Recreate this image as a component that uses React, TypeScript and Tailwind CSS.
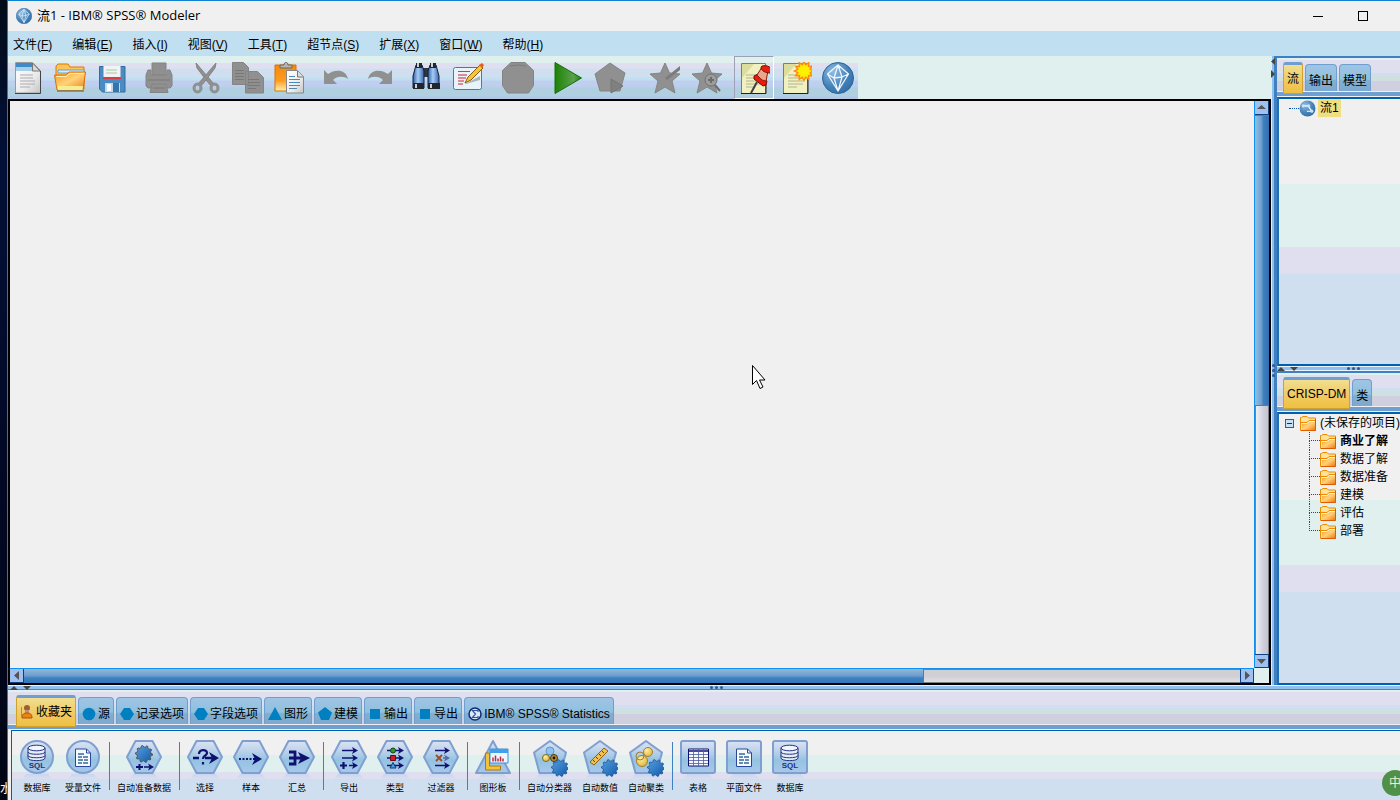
import type { ReactNode } from "react";
import clsx from "clsx";

const stripes =
  "bg-[linear-gradient(to_bottom,#f0f0f0_32%,#dff0ef_32%,#dff0ef_56%,#e0dff0_56%,#e0dff0_66%,#d0dff0_66%)]";
const tabStripes =
  "bg-[linear-gradient(to_bottom,#dff0ef_6%,#e0dff0_6%,#e0dff0_44%,#d0dff0_44%,#d0dff0_56%,#d0dfdf_56%,#d0dfdf_70%,#d0cfdf_70%)]";

const menus = [
  ["文件", "F"],
  ["编辑", "E"],
  ["插入", "I"],
  ["视图", "V"],
  ["工具", "T"],
  ["超节点", "S"],
  ["扩展", "X"],
  ["窗口", "W"],
  ["帮助", "H"],
];

/* ---------- shared drawing pieces ---------- */

function gearPath(cx: number, cy: number, r: number, teeth = 10) {
  const pts: string[] = [];
  for (let i = 0; i < teeth * 4; i++) {
    const a = (i / (teeth * 4)) * Math.PI * 2;
    const rad = i % 4 < 2 ? r : r * 0.8;
    pts.push(`${(cx + Math.cos(a) * rad).toFixed(2)},${(cy + Math.sin(a) * rad).toFixed(2)}`);
  }
  return `M${pts.join("L")}Z`;
}

function burstPath(cx: number, cy: number, r: number, rays = 12) {
  const pts: string[] = [];
  for (let i = 0; i < rays * 2; i++) {
    const a = (i / (rays * 2)) * Math.PI * 2;
    const rad = i % 2 ? r * 0.68 : r;
    pts.push(`${(cx + Math.cos(a) * rad).toFixed(2)},${(cy + Math.sin(a) * rad).toFixed(2)}`);
  }
  return `M${pts.join("L")}Z`;
}

function Defs() {
  return (
    <svg width="0" height="0" className="absolute" aria-hidden="true">
      <defs>
        <linearGradient id="node" x1="0" y1="0" x2="0" y2="1">
          <stop offset="0" stopColor="#dbe3f3" />
          <stop offset="0.3" stopColor="#bed3eb" />
          <stop offset="0.6" stopColor="#94c3e2" />
          <stop offset="1" stopColor="#a8c8ea" />
        </linearGradient>
        <linearGradient id="shadow" x1="0" y1="0" x2="0" y2="1">
          <stop offset="0" stopColor="#b9d3f0" />
          <stop offset="1" stopColor="#d0dff0" stopOpacity="0" />
        </linearGradient>
        <linearGradient id="paper" x1="0" y1="0" x2="1" y2="1">
          <stop offset="0" stopColor="#ffffff" />
          <stop offset="0.6" stopColor="#ececec" />
          <stop offset="1" stopColor="#c4c4c4" />
        </linearGradient>
        <linearGradient id="orange" x1="0" y1="0" x2="1" y2="1">
          <stop offset="0" stopColor="#f79a1c" />
          <stop offset="0.5" stopColor="#ffd27a" />
          <stop offset="1" stopColor="#ee7d10" />
        </linearGradient>
        <linearGradient id="clip" x1="0" y1="0" x2="0" y2="1">
          <stop offset="0" stopColor="#f08a10" />
          <stop offset="0.6" stopColor="#ff9c20" />
          <stop offset="1" stopColor="#fff0b0" />
        </linearGradient>
        <linearGradient id="blueSteel" x1="0" y1="0" x2="1" y2="0">
          <stop offset="0" stopColor="#2f5fa8" />
          <stop offset="0.45" stopColor="#a8ccf4" />
          <stop offset="1" stopColor="#3867b0" />
        </linearGradient>
        <linearGradient id="green" x1="0" y1="0" x2="1" y2="0">
          <stop offset="0" stopColor="#1c8206" />
          <stop offset="0.7" stopColor="#5aa14a" />
          <stop offset="1" stopColor="#1c8206" />
        </linearGradient>
        <radialGradient id="ball" cx="0.35" cy="0.3" r="0.8">
          <stop offset="0" stopColor="#90bce4" />
          <stop offset="0.6" stopColor="#4482b8" />
          <stop offset="1" stopColor="#2f6ca6" />
        </radialGradient>
        <radialGradient id="gold" cx="0.35" cy="0.3" r="0.8">
          <stop offset="0" stopColor="#fff0a8" />
          <stop offset="1" stopColor="#e0b030" />
        </radialGradient>
        <linearGradient id="gear" x1="0" y1="0" x2="1" y2="1">
          <stop offset="0" stopColor="#58a0e0" />
          <stop offset="1" stopColor="#1058a8" />
        </linearGradient>
      </defs>
    </svg>
  );
}

function Icon({ children, size = 32 }: { children: ReactNode; size?: number }) {
  return (
    <svg width={size} height={size} viewBox="0 0 32 32" aria-hidden="true">
      {children}
    </svg>
  );
}

function Gem({ size = 32 }: { size?: number }) {
  return (
    <Icon size={size}>
      <circle cx="16" cy="16" r="15.5" fill="url(#ball)" stroke="#2c669c" />
      <path
        d="M16 3 5.500 12 16 29 26.500 12ZM5.500 12 12 16l8-1 6.500-3M16 3l-4 13 4 13 4-14Z"
        fill="none"
        stroke="#eef6ff"
        strokeWidth="1.3"
        strokeLinejoin="round"
      />
    </Icon>
  );
}

function Folder() {
  return (
    <svg width="16" height="15" viewBox="0 0 16 15" className="shrink-0" aria-hidden="true">
      <path d="M.5 14.500V1.500h1L3 .5h4l1.500 1.500h7v12.500Z" fill="#ffe39a" stroke="#f08a00" />
      <path d="M2 7h5l2-2h6v9H2Z" fill="url(#orange)" />
      <path d="M1 6.500h6l2-2h6" fill="none" stroke="#f08a00" />
      <path d="M2 7.500h5.500l2-2H15" fill="none" stroke="#fff6d0" />
      <path d="M1 14.500h14.500V3" fill="none" stroke="#e05a00" />
    </svg>
  );
}

function YellowSheet() {
  return (
    <>
      <path d="M3.500 1.500h24v30h-24Z" fill="#f0f0c0" stroke="#7d8068" />
      <path d="M4 2h12L4 16Z" fill="#dcdc9c" />
      <path d="M8 13h15M8 16h15M8 19h15M8 22h15M8 25h9" stroke="#b4b490" />
      <path d="M3 31.500h25V4" fill="none" stroke="#222" />
    </>
  );
}

/* ---------- toolbar ---------- */

const grey = "#909090";
const greyEdge = "#848484";
const starPath = "M16 1 20.500 11 31 12l-8 7 3 12-10-6-10 6 3-12-8-7 10.500-1Z";

const toolIcons: Record<string, ReactNode> = {
  新建: (
    <>
      <path d="M3.500 .5h17l8 8v22.500h-25Z" fill="url(#paper)" stroke="#9a9a9a" />
      <path d="M4 1h16v4H4Z" fill="#3f8bc8" />
      <path d="M4 5h16v4H4Z" fill="#a6cfea" />
      <path d="M20.500 1v8H28Z" fill="#d8d8d8" stroke="#777" />
      <path d="M8 13h13M8 16h13M8 19h15M8 22h15M8 25h10" stroke="#a9a9b4" />
      <path d="M3 31.500H28.500V9" fill="none" stroke="#444" />
    </>
  ),
  打开: (
    <>
      <path d="M2 12V4l2-2h10l2 3h14v22H4Z" fill="#fbc55c" stroke="#e07a00" />
      <path d="M4 8h26v3H4Z" fill="#d8ecf8" stroke="#6aa0c8" />
      <path d="M.5 13h11l4-3h16L29 28H3Z" fill="url(#orange)" stroke="#e06c00" />
      <path d="M2 14.500h10l4-3h14" fill="none" stroke="#fff0b0" />
      <path d="M4 24h25l-.5 4H4Z" fill="#f3ef90" />
      <path d="M3 29h27" stroke="#6c5230" />
    </>
  ),
  保存: (
    <>
      <path d="M3.500 4.500h25.500V30H6.500l-3-3Z" fill="#4a8cc2" stroke="#2f6da4" />
      <path d="M7.500 4h17v13h-17Z" fill="#f2f4f4" />
      <path d="M10 8h11M10 11h11" stroke="#a8c8a8" />
      <path d="M7 16h18" stroke="#d84048" strokeWidth="2" />
      <path d="M9 21h15v9H9Z" fill="#c4d8e8" />
      <path d="M17 21h6v9h-6Z" fill="#3474ac" />
      <path d="M11 22h4v7h-4Z" fill="#fff" />
    </>
  ),
  打印: (
    <g fill={grey} stroke={greyEdge}>
      <path d="M9 1h14v12H9Z" />
      <path d="M3 13l2-5h3v5h16V8h3l2 5v11l-2 2H5l-2-2Z" />
      <path d="M9 22h14l2 8.500H7Z" />
      <path d="M5 18h22M10 26h12" stroke="#787878" />
    </g>
  ),
  剪切: (
    <g fill={grey} stroke={greyEdge}>
      <path d="M6 1l1 5 9 12 5 6 3-2-7-8Z" />
      <path d="M26 1l-1 5-9 12-5 6-3-2 7-8Z" />
      <ellipse cx="7.500" cy="26" rx="3.500" ry="4" fill="none" strokeWidth="3" stroke={grey} />
      <ellipse cx="24.500" cy="26" rx="3.500" ry="4" fill="none" strokeWidth="3" stroke={grey} />
    </g>
  ),
  复制: (
    <>
      <path d="M.5 .5h11l5 5v17H.5ZM13.500 9.500h12l6 6V31h-18Z" fill={grey} stroke={greyEdge} />
      <path d="M3 8.500h9M3 11.500h9M3 14.500h9M3 17.500h9M16 17.500h11M16 20.500h12M16 23.500h12M16 26.500h8" stroke="#787878" />
    </>
  ),
  粘贴: (
    <>
      <path d="M1 3h21v26H1Z" fill="url(#clip)" stroke="#d87400" />
      <path d="M6 6V3h4c0-3.500 4-3.500 4 0h4v3Z" fill="#b4b4b4" stroke="#666" />
      <path d="M12.500 8.500h11l6 6V31h-17Z" fill="url(#paper)" stroke="#888" />
      <path d="M15 14.500h6M15 17.500h11M15 20.500h11M15 23.500h11M15 26.500h8" stroke="#4b8ab4" />
      <path d="M23.500 9v6h6" fill="#ddd" stroke="#777" />
    </>
  ),
  撤销: <path d="M3 8v14h13l-4-4c4-4 11-4 15-1C25 7 14 7 7 12Z" fill={grey} />,
  重做: <path d="M29 8v14H16l4-4c-4-4-11-4-15-1C7 7 18 7 25 12Z" fill={grey} />,
  查找: (
    <>
      <path d="M13 6h6v9h-6Z" fill="#30363f" />
      <path d="M6 3h6l2 6v17H3V14Z" fill="url(#blueSteel)" stroke="#142038" />
      <path d="M20 3h6l3 11v12H18V9Z" fill="url(#blueSteel)" stroke="#142038" />
      <path d="M6 1h6v5H6ZM20 1h6v5h-6ZM3 21h11v6H3ZM18 21h12v6H18Z" fill="#22262c" />
      <path d="M8 1v4M22 1v4M6 22v4M21 22v4" stroke="#c9d2dc" strokeWidth="2" />
    </>
  ),
  编辑: (
    <>
      <rect x="1.500" y="5.500" width="28" height="22" rx="2" fill="#e9f3fa" stroke="#2f83bd" />
      <path d="M6 9.500h12" stroke="#3478b8" />
      <path d="M6 13h9M6 16h8M6 19h6M6 22h5" stroke="#d02030" />
      <path d="M13 22 28 14v4l-14 4Z" fill="#a9b6c0" />
      <path d="m13 21 3-6L28 3l3 3-12 12Z" fill="#f4c63c" stroke="#8a5a10" />
      <path d="m27 3 3-2 2 2-2 3Z" fill="#e06020" />
    </>
  ),
  停止: (
    <>
      <path d="M9 .5h14l8.500 8v15l-5 7.500h-21L.5 23.500v-15Z" fill={grey} stroke={greyEdge} />
      <path d="M8 4q8-2 16 0" fill="none" stroke="#7c7c7c" />
    </>
  ),
  运行: <path d="M3 .5v31L29.500 16Z" fill="url(#green)" stroke="#176e08" />,
  运行选择: (
    <>
      <path d="M16 1 31 11l-5 18H6L1 12Z" fill={grey} stroke={greyEdge} />
      <path d="M17 17v14l12-7Z" fill="#808080" stroke="#757575" />
    </>
  ),
  添加到收藏: (
    <>
      <path d={starPath} fill={grey} stroke={greyEdge} />
      <path d="m16 16 15-12v4L18 18Z" fill="#7c7c7c" />
    </>
  ),
  搜索节点: (
    <>
      <path d={starPath} fill={grey} stroke={greyEdge} />
      <circle cx="20" cy="18" r="6" fill="#9c9c9c" stroke="#707070" />
      <path d="M17 18h6M20 15v6M24 23l5 6" stroke="#6c6c6c" strokeWidth="2" />
    </>
  ),
  固定: (
    <>
      <YellowSheet />
      <path d="m13 31 6-11" stroke="#404040" strokeWidth="2" />
      <path d="m16 14 4-2 9 7-1 4-3 1-9-7Z" fill="#f01808" stroke="#701008" />
      <path d="m19 13 5-8 6 4-2 10-4-1Z" fill="#e8a888" stroke="#8c2018" />
      <path d="M23 5c2-3 11-1 11 4l-2 2c-4 0-9-2-9-6Z" fill="#e82010" stroke="#801008" />
    </>
  ),
  新注释: (
    <>
      <YellowSheet />
      <path d={burstPath(24, 9, 9.500)} fill="#fff000" stroke="#ff8a10" strokeWidth="1.500" />
    </>
  ),
};

const toolGroups = [
  ["新建", "打开", "保存"],
  ["打印"],
  ["剪切", "复制", "粘贴"],
  ["撤销", "重做"],
  ["查找", "编辑"],
  ["停止"],
  ["运行", "运行选择"],
  ["添加到收藏", "搜索节点"],
  ["固定", "新注释", "关于"],
];

function Toolbar() {
  return (
    <div className="h-[43px] bg-[#dff0ef] flex shrink-0">
      <div
        role="toolbar"
        className="flex items-stretch gap-[7px] bg-[linear-gradient(to_bottom,#dff0ef_7px,#e0dff0_7px,#e0dff0_12px,#d0dff0_13px,#d0dff0_21px,#c0dff0_22px,#c0dff0_24px,#c0cff0_25px,#c0cff0_29px,#b0cfe0_33px,#b0cfe0_40px,#b0c7e8_41px)]"
      >
        {toolGroups.map((group) => (
          <div key={group[0]} className={clsx("flex gap-0.5", group[0] === "添加到收藏" && "ml-2")}>
            {group.map((name) => (
              <button
                key={name}
                aria-label={name}
                className={clsx(
                  "flex items-center justify-center",
                  name === "停止" ? "w-[46px]" : "w-10",
                  name === "固定" && "border border-t-[#a0a0b4] border-l-[#a0a0b4] border-r-white border-b-white"
                )}
              >
                {name === "关于" ? <Gem /> : <Icon>{toolIcons[name]}</Icon>}
              </button>
            ))}
          </div>
        ))}
      </div>
    </div>
  );
}

/* ---------- canvas with scroll bars ---------- */

const arrowPaths = {
  up: "M1 7h9L5.500 3Z",
  down: "M1 3h9L5.500 8Z",
  left: "M8 1v9L3 5.500Z",
  right: "M3 1v9l5-4.500Z",
};

function ScrollButton({ dir }: { dir: keyof typeof arrowPaths }) {
  return (
    <button
      aria-label={dir}
      className={clsx(
        "size-3.5 shrink-0 flex items-center justify-center bg-[#a0c0f0] border-r border-b border-[#104080]",
        dir === "right" && "border-l",
        dir === "down" && "border-t"
      )}
    >
      <svg width="11" height="11" viewBox="0 0 11 11">
        <path d={arrowPaths[dir]} fill="#555" />
      </svg>
    </button>
  );
}

function Canvas() {
  return (
    <main className="relative flex-1 min-h-0 border-2 border-black bg-[#f0f0f0] grid grid-cols-[1fr_15px] grid-rows-[1fr_15px]">
      <div />
      <div className="flex flex-col border-l border-[#1090f0] bg-[#d0cfdf]">
        <ScrollButton dir="up" />
        <div className="flex-1 flex flex-col">
          <div className="h-[54%] border-y border-[#1090f0] bg-[linear-gradient(to_right,#90c0e0,#6f9fd0_45%,#4080c0_60%,#3070b0)]" />
          <div className="flex-1 border-x border-[#808088] bg-[linear-gradient(to_right,#f0f0f0,#e0dfe8_30%,#d0cfdf_60%,#c4c4cc)]" />
        </div>
        <ScrollButton dir="down" />
      </div>
      <div className="flex border-t border-[#1090f0]">
        <ScrollButton dir="left" />
        <div className="flex-1 flex">
          <div className="w-[74%] border-r border-[#1090f0] bg-[linear-gradient(to_bottom,#90b8d8,#6fa0d0_45%,#4080c0_65%,#3078b8)]" />
          <div className="flex-1 border-y border-[#808080] bg-[linear-gradient(to_bottom,#d0cfd4_50%,#e0dfe8)]" />
        </div>
        <ScrollButton dir="right" />
      </div>
      <div className="bg-[#dff0ef]" />
      {/* pointer */}
      <svg className="absolute left-[741px] top-[263px]" width="17" height="26" viewBox="0 0 17 26">
        <path d="M1.500 1.500v19l4-4 3.500 8 3-1.500-3.500-7h5.500Z" fill="#fff" stroke="#000" />
      </svg>
    </main>
  );
}

/* ---------- tabs ---------- */

function Tab({ active, icon, children }: { active?: boolean; icon?: ReactNode; children: ReactNode }) {
  return (
    <button
      role="tab"
      aria-selected={!!active}
      className={clsx(
        "relative flex items-center gap-0.5 px-[3px] border whitespace-nowrap shrink-0 leading-4",
        active
          ? "h-8 -mb-[3px] z-10 border-[#d0a030] border-t-[#6f9fd0] border-t-3 rounded-t-[3px] bg-[linear-gradient(to_bottom,#f0df90,#f0cf70_40%,#f0bf40)]"
          : "h-[27px] pt-1.5 border-[#6f9fd0] border-b-0 rounded-t-[4px] bg-[linear-gradient(to_bottom,#a0c4e4,#90c0e0_55%,#80afcf_60%,#7fa8d0)]"
      )}
    >
      {icon}
      {children}
    </button>
  );
}

function TabBar({ children, className }: { children: ReactNode; className: string }) {
  return (
    <div className="shrink-0">
      <div role="tablist" className={clsx("flex items-end gap-0.5", tabStripes, className)}>
        {children}
      </div>
      <div className="h-1.5 border-y border-[#f0f0f0] bg-[#6f9fd0]" />
    </div>
  );
}

function TabShape({ shape }: { shape: string }) {
  return (
    <svg width="14" height="14" viewBox="0 0 14 14" fill="#0080c0" aria-hidden="true">
      {shape === "circle" && <circle cx="7" cy="7" r="6.300" />}
      {shape === "hexagon" && <path d="M4 1h6l4 6-4 6H4L0 7Z" />}
      {shape === "triangle" && <path d="M7 0 14 13H0Z" />}
      {shape === "pentagon" && <path d="m7 0 7 5.500L11 13H3L0 5.500Z" />}
      {shape === "square" && <path d="M2 2h10v10H2Z" />}
      {shape === "sigma" && (
        <>
          <circle cx="7" cy="7" r="6" fill="#d8e8f8" stroke="#102878" strokeWidth="1.500" />
          <path d="M10 5V3.500H4.500L7.500 7l-3 3.500H10V9" fill="none" stroke="#305898" strokeWidth="1.200" />
        </>
      )}
      {shape === "person" && (
        <>
          <circle cx="7" cy="3" r="3" fill="#9c6038" />
          <path d="M5 5h4v4H5Z" fill="#c09070" />
          <path d="M2 13c0-4 2-5 5-5s5 1 5 5Z" fill="#f08010" stroke="#a05810" />
          <path d="M1.500 2v10" stroke="#8890a0" />
        </>
      )}
    </svg>
  );
}

/* ---------- right-hand managers ---------- */

function Dots({ vertical }: { vertical?: boolean }) {
  return (
    <span className={clsx("flex gap-0.5", vertical && "flex-col")}>
      {[0, 1, 2].map((i) => (
        <span key={i} className="size-[3px] rounded-full bg-[#305890]" />
      ))}
    </span>
  );
}

function SplitArrows() {
  return (
    <svg width="22" height="4" viewBox="0 0 22 4" fill="#444" aria-hidden="true">
      <path d="M0 4 4 0l4 4ZM13 0h8l-4 4Z" />
    </svg>
  );
}

const phases = ["商业了解", "数据了解", "数据准备", "建模", "评估", "部署"];

function SidePanels() {
  return (
    <aside className="w-[129px] shrink-0 flex border-l border-[#dff0ef]">
      <div className="relative z-10 w-0.5 bg-[#90c0f0] flex flex-col items-center justify-between">
        <svg width="4" height="22" viewBox="0 0 4 22" fill="#444" aria-hidden="true">
          <path d="M4 2v7L0 5.500ZM0 14v8l4-4Z" />
        </svg>
        <Dots vertical />
        <span className="h-[22px]" />
      </div>
      <div className="flex-1 min-w-0 flex flex-col border-l-3 border-[#4080c0] bg-[#4080c0]">
        <section className="flex-[99] min-h-0 flex flex-col pt-0.5">
          <TabBar className="h-[33px] pl-1.5">
            <Tab active>流</Tab>
            <Tab>输出</Tab>
            <Tab>模型</Tab>
          </TabBar>
          <div className={clsx("flex-1 border-2 border-r-0 border-[#0060b0] border-l-[#2070b8]", stripes)}>
            <div className="flex items-center h-[18px] pl-2.5">
              <span className="w-2.5 border-t border-dotted border-[#0050b0]" />
              <Icon size={17}>
                <circle cx="16" cy="16" r="15" fill="url(#ball)" />
                <path d="M8 11h9l7 10M15 21h8" fill="none" stroke="#fff" strokeWidth="2" />
                <circle cx="8" cy="11" r="3" fill="#cfe2f4" />
                <circle cx="18" cy="11" r="3" fill="#cfe2f4" />
                <circle cx="24" cy="21" r="3" fill="#cfe2f4" />
              </Icon>
              <span className="ml-0.5 px-0.5 leading-[18px] bg-[#f0df80]">流1</span>
            </div>
          </div>
        </section>
        <div className="h-[5px] bg-[#90c0f0] border-y border-y-[#e8f4ff] flex items-center shrink-0">
          <SplitArrows />
          <span className="ml-12">
            <Dots />
          </span>
        </div>
        <section className="flex-[100] min-h-0 flex flex-col pt-0.5">
          <TabBar className="h-[33px] pl-1.5">
            <Tab active>CRISP-DM</Tab>
            <Tab>类</Tab>
          </TabBar>
          <div className={clsx("flex-1 border-2 border-r-0 border-[#0060b0] border-l-[#2070b8] whitespace-nowrap overflow-hidden", stripes)}>
            <div className="flex items-center h-[18px] pl-1.5">
              <button aria-label="折叠" className="size-[9px] border border-[#2060b0] bg-[#c8e0f8] flex items-center justify-center">
                <span className="w-[5px] h-px bg-[#103070]" />
              </button>
              <span className="ml-1.5 mr-1">
                <Folder />
              </span>
              (未保存的项目)
            </div>
            <ul className="pl-[30px]">
              {phases.map((phase, i) => (
                <li key={phase} className="flex items-center h-[18px]">
                  <span className="self-stretch w-[11px] flex flex-col">
                    <span className="h-[9px] border-l border-b border-dotted border-[#0050b0]" />
                    {i < phases.length - 1 && <span className="h-[9px] border-l border-dotted border-[#0050b0]" />}
                  </span>
                  <Folder />
                  <span className={clsx("ml-1", i === 0 && "font-bold")}>{phase}</span>
                </li>
              ))}
            </ul>
          </div>
        </section>
      </div>
    </aside>
  );
}

/* ---------- node palette ---------- */

const frames: Record<string, string> = {
  circle: "M18 1a16 16 0 1 1 0 32 16 16 0 1 1 0-32Z",
  hexagon: "M9.500 1h17L35 17l-8.500 16h-17L1 17Z",
  pentagon: "m18 1 16 11.500L28.500 33h-21L2 12.500Z",
  triangle: "M18 1 35 33H1Z",
  square: "M3 1h30q2 0 2 2v28q0 2-2 2H3q-2 0-2-2V3q0-2 2-2Z",
};

const navy = "#101070";

function Arrow({ y, x1 = 11, x2 = 27 }: { y: number; x1?: number; x2?: number }) {
  return (
    <>
      <path d={`M${x1} ${y}H${x2 - 3}`} stroke={navy} strokeWidth="1.500" />
      <path d={`M${x2 - 6} ${y - 3.5} ${x2} ${y}l-6 3.500 1.500-3.500Z`} fill={navy} />
    </>
  );
}

const sqlDisk = (
  <>
    <path
      d="M9 8v10c0 3.500 17 3.500 17 0V8M9 12c0 3 17 3 17 0M9 15.500c0 3 17 3 17 0"
      fill="#e4eefa"
      stroke="#28307c"
    />
    <ellipse cx="17.500" cy="8" rx="8.500" ry="2.800" fill="#f0f6fd" stroke="#28307c" />
    <text x="18" y="27.500" textAnchor="middle" fontSize="8" fontWeight="bold" fill="#28307c">
      SQL
    </text>
  </>
);

const sheet = (
  <>
    <path d="M10.500 9h11l4 4v13.500h-15Z" fill="#f4faff" stroke="#284898" />
    <path d="M21.500 9v4h4" fill="none" stroke="#284898" />
    <path d="M13 14h6M13 17h4M18 17h5M13 20h5M19 20h4M13 23h4M18 23h5" stroke="#386898" strokeWidth="1.500" />
  </>
);

const cornerGear = <path d={gearPath(28, 28, 8.5)} fill="url(#gear)" stroke="#0f4c90" strokeWidth="0.700" />;

const glyphs: Record<string, ReactNode> = {
  sql: sqlDisk,
  sheet,
  prep: (
    <>
      <path d={gearPath(18, 14, 8.5)} fill="url(#gear)" stroke="#505860" />
      <path d="M10 27h7M13.500 24v6" stroke={navy} strokeWidth="2" />
      <Arrow y={27} x1={18} x2={28} />
    </>
  ),
  select: (
    <>
      <path d="M6 18h6M18 18h8" stroke={navy} strokeWidth="2.500" />
      <path d="M22 12l10 6-10 6 3-6Z" fill={navy} />
      <path d="M12 14c0-5 8-5 8-1 0 3-4 2-4 6M16 22v2.500" fill="none" stroke={navy} strokeWidth="2.200" />
    </>
  ),
  sample: (
    <>
      <path d="M6 19h16" stroke={navy} strokeWidth="2" strokeDasharray="2 1.500" />
      <path d="M19 13l10 6-10 6 3-6Z" fill={navy} />
    </>
  ),
  aggregate: (
    <>
      <path d="M10 12h6v12h-6M10 18h12" fill="none" stroke={navy} strokeWidth="2.800" />
      <path d="M19 12l12 6-12 6 3-6Z" fill={navy} />
    </>
  ),
  derive: (
    <>
      <Arrow y={10.5} />
      <Arrow y={18} />
      <Arrow y={25.5} x1={18} />
      <path d="M9 25.500h7M12.500 22v7" stroke={navy} strokeWidth="2.200" />
    </>
  ),
  type: (
    <>
      <Arrow y={10.5} x1={10} />
      <Arrow y={18} x1={10} />
      <Arrow y={25.5} x1={10} />
      <circle cx="16" cy="10.500" r="2.500" fill="#28a028" stroke="#104810" />
      <path d="M13.500 15.500h5v5h-5Z" fill="#d81828" stroke="#601010" />
      <path d="m16 22.500 3 5.500h-6Z" fill="#48a0e0" stroke="#103870" />
    </>
  ),
  filter: (
    <>
      <Arrow y={10.5} x1={12} />
      <g opacity="0.500">
        <Arrow y={18} x1={20} />
      </g>
      <Arrow y={25.5} x1={12} />
      <path d="m13 15 6 6M19 15l-6 6" stroke="#a04828" strokeWidth="1.800" />
    </>
  ),
  graph: (
    <>
      <path d="M15 9h18v14H15Z" fill="#f0f6ff" stroke="#3890d8" />
      <path d="M15 9h18v4H15Z" fill="#40a0e8" />
      <path d="M18 21.500v-4M20.500 21.500v-6M23 21.500v-3M25.500 21.500v-5M28 21.500v-3" stroke="#c02838" strokeWidth="1.500" />
      <path d="M10.500 13h4v13h11v4h-15Z" fill="#f4c040" stroke="#b07808" />
    </>
  ),
  classify: (
    <>
      <circle cx="18" cy="11" r="4" fill="#90c4f0" stroke="#5c98d8" />
      <circle cx="14" cy="18" r="3.500" fill="url(#gold)" stroke="#806818" />
      <circle cx="22" cy="18" r="3.500" fill="#c09030" stroke="#483410" />
      <circle cx="22" cy="18" r="1.400" fill="#201000" />
      {cornerGear}
    </>
  ),
  numeric: (
    <>
      <path d="M8 22 22 8l4 3-14 14Z" fill="#f0c050" stroke="#906010" />
      <path d="m11 20 2 2M14 17l2 2M17 14l2 2M20 11l2 2" stroke="#604008" />
      {cornerGear}
    </>
  ),
  cluster: (
    <>
      <circle cx="20" cy="12" r="4.500" fill="url(#gold)" stroke="#a08030" />
      <circle cx="14" cy="21" r="5.500" fill="url(#gold)" stroke="#a08030" />
      <circle cx="12" cy="16" r="4" fill="none" stroke="#a08030" />
      {cornerGear}
    </>
  ),
  table: (
    <>
      <path d="M8.500 9h20v17h-20Z" fill="#f4f8ff" stroke={navy} />
      <path d="M8.500 11h20" stroke={navy} strokeWidth="1.500" />
      <path d="M9 14.500h19M9 17.500h19M9 20.500h19M9 23.500h19M13.500 9v17M18.500 9v17M23.500 9v17" stroke="#5058a0" strokeWidth="0.800" />
    </>
  ),
};

const palette = [
  [
    ["数据库", "circle", "sql"],
    ["受量文件", "circle", "sheet"],
  ],
  [["自动准备数据", "hexagon", "prep"]],
  [
    ["选择", "hexagon", "select"],
    ["样本", "hexagon", "sample"],
    ["汇总", "hexagon", "aggregate"],
  ],
  [
    ["导出", "hexagon", "derive"],
    ["类型", "hexagon", "type"],
    ["过滤器", "hexagon", "filter"],
  ],
  [["图形板", "triangle", "graph"]],
  [
    ["自动分类器", "pentagon", "classify"],
    ["自动数值", "pentagon", "numeric"],
    ["自动聚类", "pentagon", "cluster"],
  ],
  [
    ["表格", "square", "table"],
    ["平面文件", "square", "sheet"],
    ["数据库", "square", "sql"],
  ],
];

const paletteTabs = [
  ["源", "circle"],
  ["记录选项", "hexagon"],
  ["字段选项", "hexagon"],
  ["图形", "triangle"],
  ["建模", "pentagon"],
  ["输出", "square"],
  ["导出", "square"],
  ["IBM® SPSS® Statistics", "sigma"],
];

function Palette() {
  return (
    <footer className="shrink-0">
      <TabBar className="h-[34px] pl-2">
        <Tab active icon={<TabShape shape="person" />}>
          收藏夹
        </Tab>
        {paletteTabs.map(([label, shape]) => (
          <Tab key={label} icon={<TabShape shape={shape} />}>
            {label}
          </Tab>
        ))}
      </TabBar>
      <div className="bg-[#f0f0f0] pl-[3px]">
        <div className="h-[70px] overflow-hidden flex border-t border-l border-[#0060b0] pl-0.5 bg-[linear-gradient(to_bottom,#f0f0f0_24px,#dff0ef_24px,#dff0ef_41px,#e0dff0_41px,#e0dff0_48px,#d0dff0_48px)]">
          {palette.map((group, g) => (
            <div key={g} className="flex">
              {g > 0 && <span className="w-px h-12 mt-[11px] ml-[3px] mr-0.5 bg-[#4080c0]" />}
              {group.map(([label, frame, glyph]) => (
                <button key={label} className="min-w-[46px] px-[5px] pt-[9px] flex flex-col items-center">
                  <svg width="36" height="42" viewBox="0 0 36 42" aria-hidden="true">
                    <path d="M7 34h22l5 6v2H2v-2Z" fill="url(#shadow)" opacity="0.700" />
                    <path d={frames[frame]} fill="url(#node)" stroke="#7f9fd0" strokeWidth="2" strokeLinejoin="round" />
                    {glyphs[glyph]}
                  </svg>
                  <span className="text-[9px] leading-3 whitespace-nowrap">{label}</span>
                </button>
              ))}
            </div>
          ))}
        </div>
      </div>
    </footer>
  );
}

export default function App() {
  return (
    <div className="relative h-screen overflow-hidden flex bg-[#020c20] text-black text-xs font-['Liberation_Sans','Noto_Sans_CJK_SC',sans-serif]">
      <Defs />
      {/* desktop behind the window */}
      <div className="w-[7px] shrink-0 overflow-hidden flex flex-col justify-end bg-[linear-gradient(to_bottom,#020c18,#021038_20%,#020824_60%,#010614)]">
        <span className="text-white leading-[22px]">水</span>
      </div>

      <div className="flex-1 min-w-0 flex flex-col border-t border-l border-[#1080d0] bg-[#dff0ef]">
        <header className="h-[30px] shrink-0 flex items-center bg-[#f0f0f0] pl-2 pr-[15px]">
          <Gem size={16} />
          <h1 className="flex-1 ml-[5px] text-[13px] font-['Open_Sans','Noto_Sans_CJK_SC',sans-serif]">
            流1 - IBM® SPSS® Modeler
          </h1>
          <button aria-label="最小化" className="w-[45px] h-full flex items-center justify-center">
            <span className="w-2.5 h-px bg-black" />
          </button>
          <button aria-label="最大化" className="w-[45px] h-full flex items-center justify-center">
            <span className="size-2.5 border border-black" />
          </button>
        </header>

        <nav className="h-[25px] shrink-0 flex items-center gap-5 pl-[5px] pt-0.5 bg-[#c0dff0]">
          {menus.map(([label, key]) => (
            <button key={key} className="whitespace-nowrap">
              {label}(<span className="underline">{key}</span>)
            </button>
          ))}
        </nav>

        <div className="flex-1 min-h-0 flex">
          <div className="flex-1 min-w-0 flex flex-col">
            <Toolbar />
            <Canvas />
          </div>
          <SidePanels />
        </div>

        <div className="h-[5px] shrink-0 pl-0.5 border-t border-[#e8f4f8] border-b border-b-[#5080c0] bg-[#90c0f0] flex items-center">
          <SplitArrows />
          <div className="flex-1 flex justify-center">
            <Dots />
          </div>
        </div>
        <Palette />
      </div>

      {/* input method badge */}
      <div className="absolute -right-2 bottom-1 size-[26px] rounded-full bg-[#509048] text-[#f4f0c8] flex items-center justify-center">
        中
      </div>
    </div>
  );
}
